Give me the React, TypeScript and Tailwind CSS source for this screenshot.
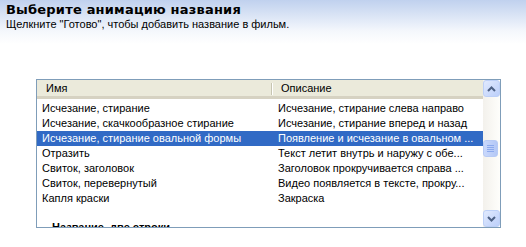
const rows = [
  ["Исчезание, стирание", "Исчезание, стирание слева направо"],
  ["Исчезание, скачкообразное стирание", "Исчезание, стирание вперед и назад"],
  ["Исчезание, стирание овальной формы", "Появление и исчезание в овальном ..."],
  ["Отразить", "Текст летит внутрь и наружу с обе..."],
  ["Свиток, заголовок", "Заголовок прокручивается справа ..."],
  ["Свиток, перевернутый", "Видео появляется в тексте, прокру..."],
  ["Капля краски", "Закраска"],
];

const ScrollButton = ({ down }: { down?: boolean }) => (
  <div className="h-[17px] w-[17px] rounded-[3px] border border-[#bdd0f7] bg-gradient-to-br from-[#e1eafe] to-[#bccffa] flex items-center justify-center">
    <svg width="9" height="6" viewBox="0 0 9 6">
      <path
        d={down ? "M1 1 L4.5 4.5 L8 1" : "M1 5 L4.5 1.5 L8 5"}
        fill="none"
        stroke="#4d6185"
        strokeWidth="2"
      />
    </svg>
  </div>
);

const App = () => {
  return (
    <div
      className="w-[526px] h-[247px] bg-gradient-to-b from-[#c0d1ee] via-[#f4f7fc] via-70% to-white pt-[2px] text-black"
      style={{ backgroundSize: "100% 44px", backgroundRepeat: "no-repeat", backgroundColor: "#fff" }}
    >
      <div className="pl-[6px] text-[13px] leading-[16px] font-bold font-['DejaVu_Sans',sans-serif] tracking-[0.2px]">
        Выберите анимацию названия
      </div>
      <div className="pl-[6px] text-[11px] leading-[13px] font-['Liberation_Sans',sans-serif]">
        Щелкните "Готово", чтобы добавить название в фильм.
      </div>

      <div className="ml-[36px] mt-[48px] w-[465px] h-[149px] border border-[#7f9db9] bg-white flex font-['Liberation_Sans',sans-serif] text-[11px]">
        <div className="flex-1 overflow-hidden">
          <div className="h-[19px] flex bg-[#ebeadb] border-b-[3px] border-[#d6d2c2] leading-[15px]">
            <div className="w-[236px] pl-[9px] flex items-center justify-between">
              <span>Имя</span>
              <span className="w-[2px] h-[12px] border-l border-[#c7c5b2] border-r border-r-white mt-[1px]" />
            </div>
            <div className="flex-1 pl-[8px] flex items-center">Описание</div>
          </div>
          <div className="pt-[2px]">
            {rows.map(([name, desc], i) => (
              <div
                key={name}
                className={`h-[15px] flex items-center leading-[15px] whitespace-nowrap ${
                  i === 2 ? "bg-[#316ac5] text-white" : ""
                }`}
              >
                <div className="w-[236px] pl-[5px] overflow-hidden">{name}</div>
                <div className="flex-1 pl-[5px] overflow-hidden">{desc}</div>
              </div>
            ))}
            <div className="h-[12px]" />
            <div className="h-[15px] pl-[15px] pt-[2px] font-bold leading-[15px] whitespace-nowrap">
              Название, две строки
            </div>
          </div>
        </div>
        <div className="w-[17px] bg-gradient-to-r from-[#f3f1ec] to-[#fefefb] flex flex-col">
          <ScrollButton />
          <div className="flex-1 pt-[43px]">
            <div className="h-[17px] w-[15px] rounded-[3px] border border-[#b8cbf5] bg-gradient-to-r from-[#c9d8fc] to-[#b4c8f6] flex flex-col items-center justify-center gap-[1px]">
              {[0, 1, 2, 3].map((k) => (
                <div key={k} className="w-[7px] h-[1px] bg-[#eef4fe] border-b border-[#8caaed]" />
              ))}
            </div>
          </div>
          <ScrollButton down />
        </div>
      </div>
    </div>
  );
};

export default App;
